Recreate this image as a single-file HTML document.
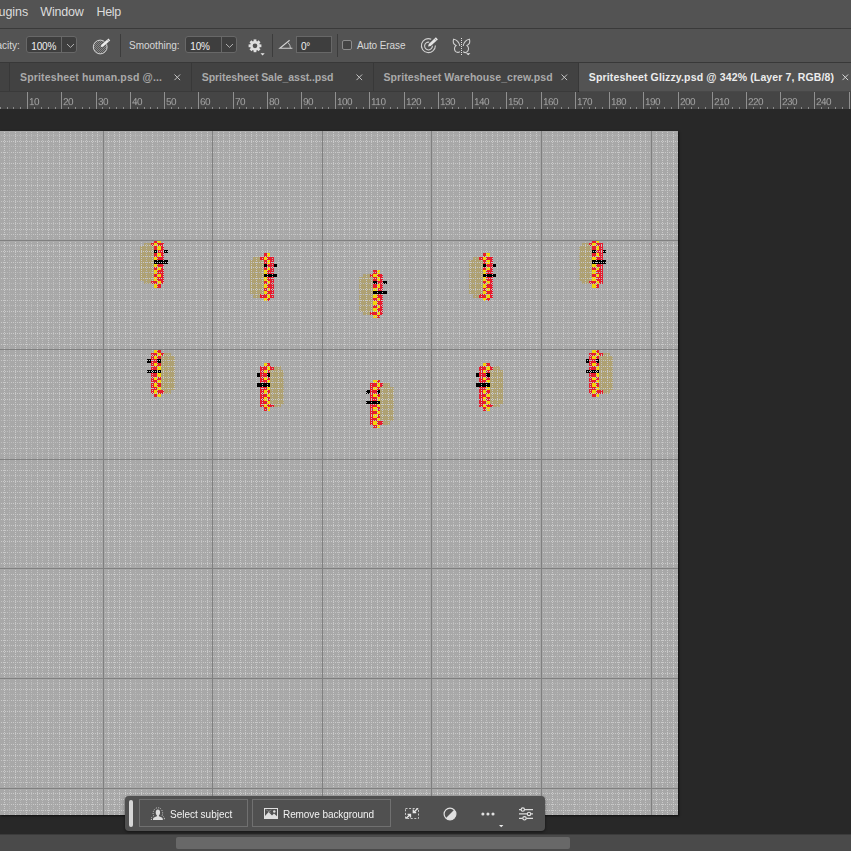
<!DOCTYPE html>
<html><head><meta charset="utf-8"><title>Photoshop</title>
<style>
html,body{margin:0;padding:0;width:851px;height:851px;overflow:hidden;background:#282828;font-family:"Liberation Sans",sans-serif;}
div{position:absolute;box-sizing:border-box}
svg{position:absolute;overflow:visible}
.t{white-space:nowrap;line-height:1}
#menu{left:0;top:0;width:851px;height:28px;background:#535353}
#menu .t{font-size:12.5px;color:#dcdcdc;top:6px}
#opt{left:0;top:29px;width:851px;height:33px;background:#535353}
#opt .t{font-size:10px;color:#d8d8d8;top:12px}
.sep{width:1px;top:5px;height:23px;background:#3c3c3c}
.box{top:7px;height:17px;background:#3e3e3e;border:1px solid #686868;border-radius:3px}
.box .t{color:#f0f0f0!important;top:4.6px!important;font-size:10px!important;letter-spacing:-.2px}
#tabs{left:0;top:63px;width:851px;height:28px;background:#424242}
#tabs .t{font-size:10.5px;font-weight:bold;color:#aaaaaa;top:9px}
.ts{top:0;width:1px;height:28px;background:#383838}
#ruler{left:0;top:92px;width:851px;height:17px;background:#454545;overflow:hidden}
#ruler .t{font-size:10px;color:#a6a6a6;top:5.7px;letter-spacing:-.5px;transform:scaleY(.875);transform-origin:0 1px;will-change:transform}
.mt{top:0;width:1px;height:17px;background:#909090}
.nt{top:15px;width:1px;height:2px;background:#8a8a8a}
#cv{left:0;top:131px;width:678px;height:684px;background:#a8a8a8;overflow:hidden;box-shadow:1px 1px 2px rgba(0,0,0,.6)}
.h{--c:#cacaca;left:0;width:678px;height:1px;background:linear-gradient(90deg,transparent 50%,var(--c) 50%) 0 0/2px 1px}
.v{--c:#cacaca;top:0;height:684px;width:1px;background:linear-gradient(180deg,transparent 50%,var(--c) 50%) 0 0/1px 2px}
.H{left:0;width:678px;height:1px;background:#808080}
.V{top:0;height:684px;width:1px;background:#808080}
.r{background:#e51c2e}.y{background:#efd30a}.k{background:#000}.b{background:#aea173}
#bar{left:125px;top:796px;width:420px;height:35px;background:#505050;border-radius:4px;box-shadow:0 1px 3px rgba(0,0,0,.5)}
#bar .t{font-size:10px;color:#f2f2f2;top:13.5px}
.btn{top:3px;height:28px;border:1px solid #707070}
#sb{left:0;top:834px;width:851px;height:17px;background:#4a4a4a;border-top:1px solid #3b3b3b}
#th{left:176px;top:2px;width:394px;height:12px;background:#686868;border-radius:2px}
</style></head><body>

<div id="menu"><div class="t" style="left:-12.7px">Plugins</div><div class="t" style="left:40.3px;letter-spacing:-.2px">Window</div><div class="t" style="left:96.6px;letter-spacing:-.4px">Help</div></div>
<div style="left:0;top:28px;width:851px;height:1px;background:#3a3a3a"></div>
<div id="opt">
<div class="t" style="left:-16.8px">Opacity:</div>
<div class="box" style="left:26px;width:51px"><div class="t" style="left:4.3px">100%</div><div style="left:34px;top:0;width:1px;height:15px;background:#686868"></div><svg style="left:38.5px;top:5.5px" width="9" height="6" viewBox="0 0 9 6"><path d="M1 1 L4.5 4.4 L8 1" fill="none" stroke="#bdbdbd" stroke-width="0.9"/></svg></div>
<svg style="left:91px;top:7px" width="22" height="20" viewBox="0 0 22 20"><defs><pattern id="ht" width="2" height="2" patternUnits="userSpaceOnUse"><rect width="1" height="1" fill="#848484"/><rect x="1" y="1" width="1" height="1" fill="#848484"/></pattern></defs><circle cx="9.2" cy="11" r="6.9" fill="url(#ht)" stroke="#d2d2d2" stroke-width="1"/><path d="M9.66 10.97 L10.35 8.71 L17.5 2.41 L19.2 4.39 L12.05 10.69 Z" fill="#ececec" stroke="#535353" stroke-width="1" paint-order="stroke"/><path d="M16.2 3.5 L17.9 5.5" stroke="#666" stroke-width="0.6"/></svg>
<div class="sep" style="left:120px"></div>
<div class="t" style="left:129px">Smoothing:</div>
<div class="box" style="left:185px;width:52px"><div class="t" style="left:4.3px">10%</div><div style="left:35px;top:0;width:1px;height:15px;background:#686868"></div><svg style="left:39.3px;top:5.5px" width="9" height="6" viewBox="0 0 9 6"><path d="M1 1 L4.5 4.4 L8 1" fill="none" stroke="#bdbdbd" stroke-width="0.9"/></svg></div>
<svg style="left:246.9px;top:8px" width="20" height="20" viewBox="-8 -8.8 20 20"><circle r="3.6" fill="none" stroke="#e0e0e0" stroke-width="2.5"/><rect x="-1.4" y="-6.4" width="2.8" height="3" transform="rotate(0)" fill="#e0e0e0"/><rect x="-1.4" y="-6.4" width="2.8" height="3" transform="rotate(45)" fill="#e0e0e0"/><rect x="-1.4" y="-6.4" width="2.8" height="3" transform="rotate(90)" fill="#e0e0e0"/><rect x="-1.4" y="-6.4" width="2.8" height="3" transform="rotate(135)" fill="#e0e0e0"/><rect x="-1.4" y="-6.4" width="2.8" height="3" transform="rotate(180)" fill="#e0e0e0"/><rect x="-1.4" y="-6.4" width="2.8" height="3" transform="rotate(225)" fill="#e0e0e0"/><rect x="-1.4" y="-6.4" width="2.8" height="3" transform="rotate(270)" fill="#e0e0e0"/><rect x="-1.4" y="-6.4" width="2.8" height="3" transform="rotate(315)" fill="#e0e0e0"/><path d="M5.5 7.4 L9.7 7.4 L7.6 9.6 Z" fill="#e8e8e8"/></svg>
<div class="sep" style="left:272px"></div>
<svg style="left:278px;top:10px" width="16" height="11" viewBox="0 0 16 11"><path d="M11.6 1.2 L1.8 9.2 L14.4 9.2" fill="none" stroke="#d2d2d2" stroke-width="1.1" stroke-linejoin="miter"/><path d="M10 3.6 Q12.4 5.8 12.4 9.2" fill="none" stroke="#c0c0c0" stroke-width="1"/></svg>
<div class="box" style="left:296px;width:36px;border-radius:0"><div class="t" style="left:4px">0°</div></div>
<div class="sep" style="left:337px"></div>
<div style="left:342px;top:11px;width:10px;height:10px;border:1px solid #8c8c8c;border-radius:2px;background:#444"></div>
<div class="t" style="left:356.9px;letter-spacing:-.1px">Auto Erase</div>
<svg style="left:419px;top:7px" width="22" height="20" viewBox="0 0 22 20"><path d="M12.2 3.2 A7 7 0 1 0 16.4 9.6" fill="none" stroke="#d0d0d0" stroke-width="1.1"/><path d="M10.2 6.2 A3.9 3.9 0 1 0 13.4 9.8" fill="none" stroke="#d0d0d0" stroke-width="1.1"/><path d="M9 10.5 L9.8 8.1 L16.9 1.3 L18.9 3.4 L11.7 10 Z" fill="#e4e4e4" stroke="#535353" stroke-width="1" paint-order="stroke"/><path d="M15.6 2.6 L17.5 4.7" stroke="#777" stroke-width="0.6"/></svg>
<svg style="left:452px;top:8px" width="20" height="19" viewBox="0 0 20 19"><path d="M7.8 9 C7.4 5.6 4.6 2.4 1.6 2.2 C0.8 4.6 1.6 7.4 4 8.6 C2.2 9.8 2 12.6 3.4 14.4 C4.8 15.8 6.8 15.6 7.8 14.6" fill="none" stroke="#d0d0d0" stroke-width="1.1"/><path d="M11.2 9 C11.6 5.6 14.4 2.4 17.4 2.2 C18.2 4.6 17.4 7.4 15 8.6 C16.8 9.8 17 12.6 15.6 14.4 C14.2 15.8 12.2 15.6 11.2 14.6" fill="none" stroke="#d0d0d0" stroke-width="1.1"/><path d="M9.5 1 V18" stroke="#e0e0e0" stroke-width="1" stroke-dasharray="1 1" fill="none" shape-rendering="crispEdges"/><path d="M14 16.2 L18.4 16.2 L16.2 18.2 Z" fill="#e4e4e4"/></svg>
</div>
<div style="left:0;top:62px;width:851px;height:1px;background:#383838"></div>
<div id="tabs">
<div class="ts" style="left:9px"></div><div class="ts" style="left:191px"></div><div class="ts" style="left:373px"></div>
<div class="ts" style="left:578px"></div><div style="left:579px;top:0;width:272px;height:28px;background:#535353"></div>
<div class="t" style="left:20px;letter-spacing:.16px">Spritesheet human.psd @...</div>
<div class="t" style="left:201.8px;letter-spacing:-.06px">Spritesheet Sale_asst..psd</div>
<div class="t" style="left:383.5px;letter-spacing:.063px">Spritesheet Warehouse_crew.psd</div>
<div class="t" style="left:588.8px;color:#ececec;letter-spacing:.143px">Spritesheet Glizzy.psd @ 342% (Layer 7, RGB/8)</div>
<svg style="left:174.1px;top:11px" width="7" height="7" viewBox="0 0 7 7"><path d="M0.5 0.5 L6.1 6.1 M6.1 0.5 L0.5 6.1" stroke="#c4c4c4" stroke-width="1" fill="none"/></svg>
<svg style="left:356.1px;top:11px" width="7" height="7" viewBox="0 0 7 7"><path d="M0.5 0.5 L6.1 6.1 M6.1 0.5 L0.5 6.1" stroke="#c4c4c4" stroke-width="1" fill="none"/></svg>
<svg style="left:560.9px;top:11px" width="7" height="7" viewBox="0 0 7 7"><path d="M0.5 0.5 L6.1 6.1 M6.1 0.5 L0.5 6.1" stroke="#c4c4c4" stroke-width="1" fill="none"/></svg>
<svg style="left:841.6px;top:11px" width="7" height="7" viewBox="0 0 7 7"><path d="M0.5 0.5 L6.1 6.1 M6.1 0.5 L0.5 6.1" stroke="#d4d4d4" stroke-width="1" fill="none"/></svg>
</div>
<div style="left:0;top:91px;width:578px;height:1px;background:#3a3a3a"></div>
<div style="left:579px;top:91px;width:272px;height:1px;background:#484848"></div>
<div id="ruler">
<div class="nt" style="left:0px"></div>
<div class="nt" style="left:7px"></div>
<div class="nt" style="left:13px"></div>
<div class="nt" style="left:20px"></div>
<div class="mt" style="left:27px"></div><div class="t" style="left:29px">10</div>
<div class="nt" style="left:34px"></div>
<div class="nt" style="left:41px"></div>
<div class="nt" style="left:48px"></div>
<div class="nt" style="left:55px"></div>
<div class="mt" style="left:61px"></div><div class="t" style="left:63px">20</div>
<div class="nt" style="left:68px"></div>
<div class="nt" style="left:75px"></div>
<div class="nt" style="left:82px"></div>
<div class="nt" style="left:89px"></div>
<div class="mt" style="left:96px"></div><div class="t" style="left:98px">30</div>
<div class="nt" style="left:102px"></div>
<div class="nt" style="left:109px"></div>
<div class="nt" style="left:116px"></div>
<div class="nt" style="left:123px"></div>
<div class="mt" style="left:130px"></div><div class="t" style="left:132px">40</div>
<div class="nt" style="left:137px"></div>
<div class="nt" style="left:144px"></div>
<div class="nt" style="left:150px"></div>
<div class="nt" style="left:157px"></div>
<div class="mt" style="left:164px"></div><div class="t" style="left:166px">50</div>
<div class="nt" style="left:171px"></div>
<div class="nt" style="left:178px"></div>
<div class="nt" style="left:185px"></div>
<div class="nt" style="left:191px"></div>
<div class="mt" style="left:198px"></div><div class="t" style="left:200px">60</div>
<div class="nt" style="left:205px"></div>
<div class="nt" style="left:212px"></div>
<div class="nt" style="left:219px"></div>
<div class="nt" style="left:226px"></div>
<div class="mt" style="left:233px"></div><div class="t" style="left:235px">70</div>
<div class="nt" style="left:239px"></div>
<div class="nt" style="left:246px"></div>
<div class="nt" style="left:253px"></div>
<div class="nt" style="left:260px"></div>
<div class="mt" style="left:267px"></div><div class="t" style="left:269px">80</div>
<div class="nt" style="left:274px"></div>
<div class="nt" style="left:280px"></div>
<div class="nt" style="left:287px"></div>
<div class="nt" style="left:294px"></div>
<div class="mt" style="left:301px"></div><div class="t" style="left:303px">90</div>
<div class="nt" style="left:308px"></div>
<div class="nt" style="left:315px"></div>
<div class="nt" style="left:322px"></div>
<div class="nt" style="left:328px"></div>
<div class="mt" style="left:335px"></div><div class="t" style="left:337px">100</div>
<div class="nt" style="left:342px"></div>
<div class="nt" style="left:349px"></div>
<div class="nt" style="left:356px"></div>
<div class="nt" style="left:363px"></div>
<div class="mt" style="left:369px"></div><div class="t" style="left:371px">110</div>
<div class="nt" style="left:376px"></div>
<div class="nt" style="left:383px"></div>
<div class="nt" style="left:390px"></div>
<div class="nt" style="left:397px"></div>
<div class="mt" style="left:404px"></div><div class="t" style="left:406px">120</div>
<div class="nt" style="left:411px"></div>
<div class="nt" style="left:417px"></div>
<div class="nt" style="left:424px"></div>
<div class="nt" style="left:431px"></div>
<div class="mt" style="left:438px"></div><div class="t" style="left:440px">130</div>
<div class="nt" style="left:445px"></div>
<div class="nt" style="left:452px"></div>
<div class="nt" style="left:458px"></div>
<div class="nt" style="left:465px"></div>
<div class="mt" style="left:472px"></div><div class="t" style="left:474px">140</div>
<div class="nt" style="left:479px"></div>
<div class="nt" style="left:486px"></div>
<div class="nt" style="left:493px"></div>
<div class="nt" style="left:500px"></div>
<div class="mt" style="left:506px"></div><div class="t" style="left:508px">150</div>
<div class="nt" style="left:513px"></div>
<div class="nt" style="left:520px"></div>
<div class="nt" style="left:527px"></div>
<div class="nt" style="left:534px"></div>
<div class="mt" style="left:541px"></div><div class="t" style="left:543px">160</div>
<div class="nt" style="left:547px"></div>
<div class="nt" style="left:554px"></div>
<div class="nt" style="left:561px"></div>
<div class="nt" style="left:568px"></div>
<div class="mt" style="left:575px"></div><div class="t" style="left:577px">170</div>
<div class="nt" style="left:582px"></div>
<div class="nt" style="left:589px"></div>
<div class="nt" style="left:595px"></div>
<div class="nt" style="left:602px"></div>
<div class="mt" style="left:609px"></div><div class="t" style="left:611px">180</div>
<div class="nt" style="left:616px"></div>
<div class="nt" style="left:623px"></div>
<div class="nt" style="left:630px"></div>
<div class="nt" style="left:636px"></div>
<div class="mt" style="left:643px"></div><div class="t" style="left:645px">190</div>
<div class="nt" style="left:650px"></div>
<div class="nt" style="left:657px"></div>
<div class="nt" style="left:664px"></div>
<div class="nt" style="left:671px"></div>
<div class="mt" style="left:678px"></div><div class="t" style="left:680px">200</div>
<div class="nt" style="left:684px"></div>
<div class="nt" style="left:691px"></div>
<div class="nt" style="left:698px"></div>
<div class="nt" style="left:705px"></div>
<div class="mt" style="left:712px"></div><div class="t" style="left:714px">210</div>
<div class="nt" style="left:719px"></div>
<div class="nt" style="left:725px"></div>
<div class="nt" style="left:732px"></div>
<div class="nt" style="left:739px"></div>
<div class="mt" style="left:746px"></div><div class="t" style="left:748px">220</div>
<div class="nt" style="left:753px"></div>
<div class="nt" style="left:760px"></div>
<div class="nt" style="left:767px"></div>
<div class="nt" style="left:773px"></div>
<div class="mt" style="left:780px"></div><div class="t" style="left:782px">230</div>
<div class="nt" style="left:787px"></div>
<div class="nt" style="left:794px"></div>
<div class="nt" style="left:801px"></div>
<div class="nt" style="left:808px"></div>
<div class="mt" style="left:814px"></div><div class="t" style="left:816px">240</div>
<div class="nt" style="left:821px"></div>
<div class="nt" style="left:828px"></div>
<div class="nt" style="left:835px"></div>
<div class="nt" style="left:842px"></div>
<div class="mt" style="left:849px"></div><div class="t" style="left:851px">250</div>
</div>
<div id="cv">
<div class="b" style="left:140px;top:115px;width:14px;height:35px"></div>
<div class="b" style="left:144px;top:112px;width:10px;height:3px"></div>
<div class="b" style="left:144px;top:150px;width:10px;height:3px"></div>
<div class="r" style="left:151px;top:112px;width:3px;height:3px"></div>
<div class="r" style="left:151px;top:150px;width:3px;height:3px"></div>
<div class="r" style="left:154px;top:109px;width:3px;height:3px"></div>
<div class="y" style="left:157px;top:109px;width:4px;height:3px"></div>
<div class="y" style="left:154px;top:112px;width:3px;height:3px"></div>
<div class="r" style="left:157px;top:112px;width:4px;height:3px"></div>
<div class="r" style="left:161px;top:112px;width:3px;height:3px"></div>
<div class="r" style="left:154px;top:115px;width:3px;height:4px"></div>
<div class="y" style="left:157px;top:115px;width:4px;height:4px"></div>
<div class="r" style="left:161px;top:115px;width:3px;height:4px"></div>
<div class="k" style="left:154px;top:119px;width:3px;height:3px"></div>
<div class="r" style="left:157px;top:119px;width:4px;height:3px"></div>
<div class="r" style="left:161px;top:119px;width:3px;height:3px"></div>
<div class="r" style="left:154px;top:122px;width:3px;height:4px"></div>
<div class="y" style="left:157px;top:122px;width:4px;height:4px"></div>
<div class="r" style="left:161px;top:122px;width:3px;height:4px"></div>
<div class="y" style="left:154px;top:126px;width:3px;height:3px"></div>
<div class="r" style="left:157px;top:126px;width:4px;height:3px"></div>
<div class="r" style="left:161px;top:126px;width:3px;height:3px"></div>
<div class="k" style="left:154px;top:129px;width:3px;height:4px"></div>
<div class="k" style="left:157px;top:129px;width:4px;height:4px"></div>
<div class="k" style="left:161px;top:129px;width:3px;height:4px"></div>
<div class="y" style="left:154px;top:133px;width:3px;height:3px"></div>
<div class="r" style="left:157px;top:133px;width:4px;height:3px"></div>
<div class="r" style="left:161px;top:133px;width:3px;height:3px"></div>
<div class="r" style="left:154px;top:136px;width:3px;height:3px"></div>
<div class="y" style="left:157px;top:136px;width:4px;height:3px"></div>
<div class="r" style="left:161px;top:136px;width:3px;height:3px"></div>
<div class="y" style="left:154px;top:139px;width:3px;height:4px"></div>
<div class="r" style="left:157px;top:139px;width:4px;height:4px"></div>
<div class="r" style="left:161px;top:139px;width:3px;height:4px"></div>
<div class="r" style="left:154px;top:143px;width:3px;height:3px"></div>
<div class="y" style="left:157px;top:143px;width:4px;height:3px"></div>
<div class="r" style="left:161px;top:143px;width:3px;height:3px"></div>
<div class="y" style="left:154px;top:146px;width:3px;height:4px"></div>
<div class="r" style="left:157px;top:146px;width:4px;height:4px"></div>
<div class="r" style="left:161px;top:146px;width:3px;height:4px"></div>
<div class="r" style="left:154px;top:150px;width:3px;height:3px"></div>
<div class="y" style="left:157px;top:150px;width:4px;height:3px"></div>
<div class="r" style="left:161px;top:150px;width:3px;height:3px"></div>
<div class="y" style="left:154px;top:153px;width:3px;height:4px"></div>
<div class="r" style="left:157px;top:153px;width:4px;height:4px"></div>
<div class="k" style="left:164px;top:119px;width:4px;height:3px"></div>
<div class="k" style="left:164px;top:129px;width:4px;height:4px"></div>
<div class="b" style="left:161px;top:225px;width:14px;height:34px"></div>
<div class="b" style="left:161px;top:222px;width:10px;height:3px"></div>
<div class="b" style="left:161px;top:259px;width:10px;height:4px"></div>
<div class="r" style="left:161px;top:222px;width:3px;height:3px"></div>
<div class="r" style="left:161px;top:259px;width:3px;height:4px"></div>
<div class="r" style="left:157px;top:218px;width:4px;height:4px"></div>
<div class="y" style="left:154px;top:218px;width:3px;height:4px"></div>
<div class="y" style="left:157px;top:222px;width:4px;height:3px"></div>
<div class="r" style="left:154px;top:222px;width:3px;height:3px"></div>
<div class="r" style="left:151px;top:222px;width:3px;height:3px"></div>
<div class="r" style="left:157px;top:225px;width:4px;height:3px"></div>
<div class="y" style="left:154px;top:225px;width:3px;height:3px"></div>
<div class="r" style="left:151px;top:225px;width:3px;height:3px"></div>
<div class="k" style="left:157px;top:228px;width:4px;height:4px"></div>
<div class="r" style="left:154px;top:228px;width:3px;height:4px"></div>
<div class="r" style="left:151px;top:228px;width:3px;height:4px"></div>
<div class="r" style="left:157px;top:232px;width:4px;height:3px"></div>
<div class="y" style="left:154px;top:232px;width:3px;height:3px"></div>
<div class="r" style="left:151px;top:232px;width:3px;height:3px"></div>
<div class="y" style="left:157px;top:235px;width:4px;height:4px"></div>
<div class="r" style="left:154px;top:235px;width:3px;height:4px"></div>
<div class="r" style="left:151px;top:235px;width:3px;height:4px"></div>
<div class="k" style="left:157px;top:239px;width:4px;height:3px"></div>
<div class="k" style="left:154px;top:239px;width:3px;height:3px"></div>
<div class="k" style="left:151px;top:239px;width:3px;height:3px"></div>
<div class="y" style="left:157px;top:242px;width:4px;height:4px"></div>
<div class="r" style="left:154px;top:242px;width:3px;height:4px"></div>
<div class="r" style="left:151px;top:242px;width:3px;height:4px"></div>
<div class="r" style="left:157px;top:246px;width:4px;height:3px"></div>
<div class="y" style="left:154px;top:246px;width:3px;height:3px"></div>
<div class="r" style="left:151px;top:246px;width:3px;height:3px"></div>
<div class="y" style="left:157px;top:249px;width:4px;height:3px"></div>
<div class="r" style="left:154px;top:249px;width:3px;height:3px"></div>
<div class="r" style="left:151px;top:249px;width:3px;height:3px"></div>
<div class="r" style="left:157px;top:252px;width:4px;height:4px"></div>
<div class="y" style="left:154px;top:252px;width:3px;height:4px"></div>
<div class="r" style="left:151px;top:252px;width:3px;height:4px"></div>
<div class="y" style="left:157px;top:256px;width:4px;height:3px"></div>
<div class="r" style="left:154px;top:256px;width:3px;height:3px"></div>
<div class="r" style="left:151px;top:256px;width:3px;height:3px"></div>
<div class="r" style="left:157px;top:259px;width:4px;height:4px"></div>
<div class="y" style="left:154px;top:259px;width:3px;height:4px"></div>
<div class="r" style="left:151px;top:259px;width:3px;height:4px"></div>
<div class="y" style="left:157px;top:263px;width:4px;height:3px"></div>
<div class="r" style="left:154px;top:263px;width:3px;height:3px"></div>
<div class="k" style="left:147px;top:228px;width:4px;height:4px"></div>
<div class="k" style="left:147px;top:239px;width:4px;height:3px"></div>
<div class="b" style="left:250px;top:129px;width:14px;height:34px"></div>
<div class="b" style="left:253px;top:126px;width:11px;height:3px"></div>
<div class="b" style="left:253px;top:163px;width:11px;height:4px"></div>
<div class="r" style="left:260px;top:126px;width:4px;height:3px"></div>
<div class="r" style="left:260px;top:163px;width:4px;height:4px"></div>
<div class="r" style="left:264px;top:122px;width:3px;height:4px"></div>
<div class="y" style="left:267px;top:122px;width:3px;height:4px"></div>
<div class="y" style="left:264px;top:126px;width:3px;height:3px"></div>
<div class="r" style="left:267px;top:126px;width:3px;height:3px"></div>
<div class="r" style="left:270px;top:126px;width:4px;height:3px"></div>
<div class="r" style="left:264px;top:129px;width:3px;height:4px"></div>
<div class="y" style="left:267px;top:129px;width:3px;height:4px"></div>
<div class="r" style="left:270px;top:129px;width:4px;height:4px"></div>
<div class="k" style="left:264px;top:133px;width:3px;height:3px"></div>
<div class="r" style="left:267px;top:133px;width:3px;height:3px"></div>
<div class="r" style="left:270px;top:133px;width:4px;height:3px"></div>
<div class="r" style="left:264px;top:136px;width:3px;height:3px"></div>
<div class="y" style="left:267px;top:136px;width:3px;height:3px"></div>
<div class="r" style="left:270px;top:136px;width:4px;height:3px"></div>
<div class="y" style="left:264px;top:139px;width:3px;height:4px"></div>
<div class="r" style="left:267px;top:139px;width:3px;height:4px"></div>
<div class="r" style="left:270px;top:139px;width:4px;height:4px"></div>
<div class="k" style="left:264px;top:143px;width:3px;height:3px"></div>
<div class="k" style="left:267px;top:143px;width:3px;height:3px"></div>
<div class="k" style="left:270px;top:143px;width:4px;height:3px"></div>
<div class="y" style="left:264px;top:146px;width:3px;height:4px"></div>
<div class="r" style="left:267px;top:146px;width:3px;height:4px"></div>
<div class="r" style="left:270px;top:146px;width:4px;height:4px"></div>
<div class="r" style="left:264px;top:150px;width:3px;height:3px"></div>
<div class="y" style="left:267px;top:150px;width:3px;height:3px"></div>
<div class="r" style="left:270px;top:150px;width:4px;height:3px"></div>
<div class="y" style="left:264px;top:153px;width:3px;height:4px"></div>
<div class="r" style="left:267px;top:153px;width:3px;height:4px"></div>
<div class="r" style="left:270px;top:153px;width:4px;height:4px"></div>
<div class="r" style="left:264px;top:157px;width:3px;height:3px"></div>
<div class="y" style="left:267px;top:157px;width:3px;height:3px"></div>
<div class="r" style="left:270px;top:157px;width:4px;height:3px"></div>
<div class="y" style="left:264px;top:160px;width:3px;height:3px"></div>
<div class="r" style="left:267px;top:160px;width:3px;height:3px"></div>
<div class="r" style="left:270px;top:160px;width:4px;height:3px"></div>
<div class="r" style="left:264px;top:163px;width:3px;height:4px"></div>
<div class="y" style="left:267px;top:163px;width:3px;height:4px"></div>
<div class="r" style="left:270px;top:163px;width:4px;height:4px"></div>
<div class="y" style="left:264px;top:167px;width:3px;height:3px"></div>
<div class="r" style="left:267px;top:167px;width:3px;height:3px"></div>
<div class="k" style="left:274px;top:133px;width:3px;height:3px"></div>
<div class="k" style="left:274px;top:143px;width:3px;height:3px"></div>
<div class="b" style="left:270px;top:239px;width:14px;height:34px"></div>
<div class="b" style="left:270px;top:235px;width:11px;height:4px"></div>
<div class="b" style="left:270px;top:273px;width:11px;height:3px"></div>
<div class="r" style="left:270px;top:235px;width:4px;height:4px"></div>
<div class="r" style="left:270px;top:273px;width:4px;height:3px"></div>
<div class="r" style="left:267px;top:232px;width:3px;height:3px"></div>
<div class="y" style="left:264px;top:232px;width:3px;height:3px"></div>
<div class="y" style="left:267px;top:235px;width:3px;height:4px"></div>
<div class="r" style="left:264px;top:235px;width:3px;height:4px"></div>
<div class="r" style="left:260px;top:235px;width:4px;height:4px"></div>
<div class="r" style="left:267px;top:239px;width:3px;height:3px"></div>
<div class="y" style="left:264px;top:239px;width:3px;height:3px"></div>
<div class="r" style="left:260px;top:239px;width:4px;height:3px"></div>
<div class="k" style="left:267px;top:242px;width:3px;height:4px"></div>
<div class="r" style="left:264px;top:242px;width:3px;height:4px"></div>
<div class="r" style="left:260px;top:242px;width:4px;height:4px"></div>
<div class="r" style="left:267px;top:246px;width:3px;height:3px"></div>
<div class="y" style="left:264px;top:246px;width:3px;height:3px"></div>
<div class="r" style="left:260px;top:246px;width:4px;height:3px"></div>
<div class="y" style="left:267px;top:249px;width:3px;height:3px"></div>
<div class="r" style="left:264px;top:249px;width:3px;height:3px"></div>
<div class="r" style="left:260px;top:249px;width:4px;height:3px"></div>
<div class="k" style="left:267px;top:252px;width:3px;height:4px"></div>
<div class="k" style="left:264px;top:252px;width:3px;height:4px"></div>
<div class="k" style="left:260px;top:252px;width:4px;height:4px"></div>
<div class="y" style="left:267px;top:256px;width:3px;height:3px"></div>
<div class="r" style="left:264px;top:256px;width:3px;height:3px"></div>
<div class="r" style="left:260px;top:256px;width:4px;height:3px"></div>
<div class="r" style="left:267px;top:259px;width:3px;height:4px"></div>
<div class="y" style="left:264px;top:259px;width:3px;height:4px"></div>
<div class="r" style="left:260px;top:259px;width:4px;height:4px"></div>
<div class="y" style="left:267px;top:263px;width:3px;height:3px"></div>
<div class="r" style="left:264px;top:263px;width:3px;height:3px"></div>
<div class="r" style="left:260px;top:263px;width:4px;height:3px"></div>
<div class="r" style="left:267px;top:266px;width:3px;height:4px"></div>
<div class="y" style="left:264px;top:266px;width:3px;height:4px"></div>
<div class="r" style="left:260px;top:266px;width:4px;height:4px"></div>
<div class="y" style="left:267px;top:270px;width:3px;height:3px"></div>
<div class="r" style="left:264px;top:270px;width:3px;height:3px"></div>
<div class="r" style="left:260px;top:270px;width:4px;height:3px"></div>
<div class="r" style="left:267px;top:273px;width:3px;height:3px"></div>
<div class="y" style="left:264px;top:273px;width:3px;height:3px"></div>
<div class="r" style="left:260px;top:273px;width:4px;height:3px"></div>
<div class="y" style="left:267px;top:276px;width:3px;height:4px"></div>
<div class="r" style="left:264px;top:276px;width:3px;height:4px"></div>
<div class="k" style="left:257px;top:242px;width:3px;height:4px"></div>
<div class="k" style="left:257px;top:252px;width:3px;height:4px"></div>
<div class="b" style="left:359px;top:146px;width:14px;height:35px"></div>
<div class="b" style="left:363px;top:143px;width:10px;height:3px"></div>
<div class="b" style="left:363px;top:181px;width:10px;height:3px"></div>
<div class="r" style="left:370px;top:143px;width:3px;height:3px"></div>
<div class="r" style="left:370px;top:181px;width:3px;height:3px"></div>
<div class="r" style="left:373px;top:139px;width:4px;height:4px"></div>
<div class="y" style="left:377px;top:139px;width:3px;height:4px"></div>
<div class="y" style="left:373px;top:143px;width:4px;height:3px"></div>
<div class="r" style="left:377px;top:143px;width:3px;height:3px"></div>
<div class="r" style="left:380px;top:143px;width:3px;height:3px"></div>
<div class="r" style="left:373px;top:146px;width:4px;height:4px"></div>
<div class="y" style="left:377px;top:146px;width:3px;height:4px"></div>
<div class="r" style="left:380px;top:146px;width:3px;height:4px"></div>
<div class="k" style="left:373px;top:150px;width:4px;height:3px"></div>
<div class="r" style="left:377px;top:150px;width:3px;height:3px"></div>
<div class="r" style="left:380px;top:150px;width:3px;height:3px"></div>
<div class="r" style="left:373px;top:153px;width:4px;height:4px"></div>
<div class="y" style="left:377px;top:153px;width:3px;height:4px"></div>
<div class="r" style="left:380px;top:153px;width:3px;height:4px"></div>
<div class="y" style="left:373px;top:157px;width:4px;height:3px"></div>
<div class="r" style="left:377px;top:157px;width:3px;height:3px"></div>
<div class="r" style="left:380px;top:157px;width:3px;height:3px"></div>
<div class="k" style="left:373px;top:160px;width:4px;height:3px"></div>
<div class="k" style="left:377px;top:160px;width:3px;height:3px"></div>
<div class="k" style="left:380px;top:160px;width:3px;height:3px"></div>
<div class="y" style="left:373px;top:163px;width:4px;height:4px"></div>
<div class="r" style="left:377px;top:163px;width:3px;height:4px"></div>
<div class="r" style="left:380px;top:163px;width:3px;height:4px"></div>
<div class="r" style="left:373px;top:167px;width:4px;height:3px"></div>
<div class="y" style="left:377px;top:167px;width:3px;height:3px"></div>
<div class="r" style="left:380px;top:167px;width:3px;height:3px"></div>
<div class="y" style="left:373px;top:170px;width:4px;height:4px"></div>
<div class="r" style="left:377px;top:170px;width:3px;height:4px"></div>
<div class="r" style="left:380px;top:170px;width:3px;height:4px"></div>
<div class="r" style="left:373px;top:174px;width:4px;height:3px"></div>
<div class="y" style="left:377px;top:174px;width:3px;height:3px"></div>
<div class="r" style="left:380px;top:174px;width:3px;height:3px"></div>
<div class="y" style="left:373px;top:177px;width:4px;height:4px"></div>
<div class="r" style="left:377px;top:177px;width:3px;height:4px"></div>
<div class="r" style="left:380px;top:177px;width:3px;height:4px"></div>
<div class="r" style="left:373px;top:181px;width:4px;height:3px"></div>
<div class="y" style="left:377px;top:181px;width:3px;height:3px"></div>
<div class="r" style="left:380px;top:181px;width:3px;height:3px"></div>
<div class="y" style="left:373px;top:184px;width:4px;height:3px"></div>
<div class="r" style="left:377px;top:184px;width:3px;height:3px"></div>
<div class="k" style="left:383px;top:150px;width:4px;height:3px"></div>
<div class="k" style="left:383px;top:160px;width:4px;height:3px"></div>
<div class="b" style="left:380px;top:256px;width:14px;height:34px"></div>
<div class="b" style="left:380px;top:252px;width:10px;height:4px"></div>
<div class="b" style="left:380px;top:290px;width:10px;height:4px"></div>
<div class="r" style="left:380px;top:252px;width:3px;height:4px"></div>
<div class="r" style="left:380px;top:290px;width:3px;height:4px"></div>
<div class="r" style="left:377px;top:249px;width:3px;height:3px"></div>
<div class="y" style="left:373px;top:249px;width:4px;height:3px"></div>
<div class="y" style="left:377px;top:252px;width:3px;height:4px"></div>
<div class="r" style="left:373px;top:252px;width:4px;height:4px"></div>
<div class="r" style="left:370px;top:252px;width:3px;height:4px"></div>
<div class="r" style="left:377px;top:256px;width:3px;height:3px"></div>
<div class="y" style="left:373px;top:256px;width:4px;height:3px"></div>
<div class="r" style="left:370px;top:256px;width:3px;height:3px"></div>
<div class="k" style="left:377px;top:259px;width:3px;height:4px"></div>
<div class="r" style="left:373px;top:259px;width:4px;height:4px"></div>
<div class="r" style="left:370px;top:259px;width:3px;height:4px"></div>
<div class="r" style="left:377px;top:263px;width:3px;height:3px"></div>
<div class="y" style="left:373px;top:263px;width:4px;height:3px"></div>
<div class="r" style="left:370px;top:263px;width:3px;height:3px"></div>
<div class="y" style="left:377px;top:266px;width:3px;height:4px"></div>
<div class="r" style="left:373px;top:266px;width:4px;height:4px"></div>
<div class="r" style="left:370px;top:266px;width:3px;height:4px"></div>
<div class="k" style="left:377px;top:270px;width:3px;height:3px"></div>
<div class="k" style="left:373px;top:270px;width:4px;height:3px"></div>
<div class="k" style="left:370px;top:270px;width:3px;height:3px"></div>
<div class="y" style="left:377px;top:273px;width:3px;height:3px"></div>
<div class="r" style="left:373px;top:273px;width:4px;height:3px"></div>
<div class="r" style="left:370px;top:273px;width:3px;height:3px"></div>
<div class="r" style="left:377px;top:276px;width:3px;height:4px"></div>
<div class="y" style="left:373px;top:276px;width:4px;height:4px"></div>
<div class="r" style="left:370px;top:276px;width:3px;height:4px"></div>
<div class="y" style="left:377px;top:280px;width:3px;height:3px"></div>
<div class="r" style="left:373px;top:280px;width:4px;height:3px"></div>
<div class="r" style="left:370px;top:280px;width:3px;height:3px"></div>
<div class="r" style="left:377px;top:283px;width:3px;height:4px"></div>
<div class="y" style="left:373px;top:283px;width:4px;height:4px"></div>
<div class="r" style="left:370px;top:283px;width:3px;height:4px"></div>
<div class="y" style="left:377px;top:287px;width:3px;height:3px"></div>
<div class="r" style="left:373px;top:287px;width:4px;height:3px"></div>
<div class="r" style="left:370px;top:287px;width:3px;height:3px"></div>
<div class="r" style="left:377px;top:290px;width:3px;height:4px"></div>
<div class="y" style="left:373px;top:290px;width:4px;height:4px"></div>
<div class="r" style="left:370px;top:290px;width:3px;height:4px"></div>
<div class="y" style="left:377px;top:294px;width:3px;height:3px"></div>
<div class="r" style="left:373px;top:294px;width:4px;height:3px"></div>
<div class="k" style="left:366px;top:259px;width:4px;height:4px"></div>
<div class="k" style="left:366px;top:270px;width:4px;height:3px"></div>
<div class="b" style="left:469px;top:129px;width:14px;height:34px"></div>
<div class="b" style="left:473px;top:126px;width:10px;height:3px"></div>
<div class="b" style="left:473px;top:163px;width:10px;height:4px"></div>
<div class="r" style="left:479px;top:126px;width:4px;height:3px"></div>
<div class="r" style="left:479px;top:163px;width:4px;height:4px"></div>
<div class="r" style="left:483px;top:122px;width:3px;height:4px"></div>
<div class="y" style="left:486px;top:122px;width:4px;height:4px"></div>
<div class="y" style="left:483px;top:126px;width:3px;height:3px"></div>
<div class="r" style="left:486px;top:126px;width:4px;height:3px"></div>
<div class="r" style="left:490px;top:126px;width:3px;height:3px"></div>
<div class="r" style="left:483px;top:129px;width:3px;height:4px"></div>
<div class="y" style="left:486px;top:129px;width:4px;height:4px"></div>
<div class="r" style="left:490px;top:129px;width:3px;height:4px"></div>
<div class="k" style="left:483px;top:133px;width:3px;height:3px"></div>
<div class="r" style="left:486px;top:133px;width:4px;height:3px"></div>
<div class="r" style="left:490px;top:133px;width:3px;height:3px"></div>
<div class="r" style="left:483px;top:136px;width:3px;height:3px"></div>
<div class="y" style="left:486px;top:136px;width:4px;height:3px"></div>
<div class="r" style="left:490px;top:136px;width:3px;height:3px"></div>
<div class="y" style="left:483px;top:139px;width:3px;height:4px"></div>
<div class="r" style="left:486px;top:139px;width:4px;height:4px"></div>
<div class="r" style="left:490px;top:139px;width:3px;height:4px"></div>
<div class="k" style="left:483px;top:143px;width:3px;height:3px"></div>
<div class="k" style="left:486px;top:143px;width:4px;height:3px"></div>
<div class="k" style="left:490px;top:143px;width:3px;height:3px"></div>
<div class="y" style="left:483px;top:146px;width:3px;height:4px"></div>
<div class="r" style="left:486px;top:146px;width:4px;height:4px"></div>
<div class="r" style="left:490px;top:146px;width:3px;height:4px"></div>
<div class="r" style="left:483px;top:150px;width:3px;height:3px"></div>
<div class="y" style="left:486px;top:150px;width:4px;height:3px"></div>
<div class="r" style="left:490px;top:150px;width:3px;height:3px"></div>
<div class="y" style="left:483px;top:153px;width:3px;height:4px"></div>
<div class="r" style="left:486px;top:153px;width:4px;height:4px"></div>
<div class="r" style="left:490px;top:153px;width:3px;height:4px"></div>
<div class="r" style="left:483px;top:157px;width:3px;height:3px"></div>
<div class="y" style="left:486px;top:157px;width:4px;height:3px"></div>
<div class="r" style="left:490px;top:157px;width:3px;height:3px"></div>
<div class="y" style="left:483px;top:160px;width:3px;height:3px"></div>
<div class="r" style="left:486px;top:160px;width:4px;height:3px"></div>
<div class="r" style="left:490px;top:160px;width:3px;height:3px"></div>
<div class="r" style="left:483px;top:163px;width:3px;height:4px"></div>
<div class="y" style="left:486px;top:163px;width:4px;height:4px"></div>
<div class="r" style="left:490px;top:163px;width:3px;height:4px"></div>
<div class="y" style="left:483px;top:167px;width:3px;height:3px"></div>
<div class="r" style="left:486px;top:167px;width:4px;height:3px"></div>
<div class="k" style="left:493px;top:133px;width:3px;height:3px"></div>
<div class="k" style="left:493px;top:143px;width:3px;height:3px"></div>
<div class="b" style="left:490px;top:239px;width:13px;height:34px"></div>
<div class="b" style="left:490px;top:235px;width:10px;height:4px"></div>
<div class="b" style="left:490px;top:273px;width:10px;height:3px"></div>
<div class="r" style="left:490px;top:235px;width:3px;height:4px"></div>
<div class="r" style="left:490px;top:273px;width:3px;height:3px"></div>
<div class="r" style="left:486px;top:232px;width:4px;height:3px"></div>
<div class="y" style="left:483px;top:232px;width:3px;height:3px"></div>
<div class="y" style="left:486px;top:235px;width:4px;height:4px"></div>
<div class="r" style="left:483px;top:235px;width:3px;height:4px"></div>
<div class="r" style="left:479px;top:235px;width:4px;height:4px"></div>
<div class="r" style="left:486px;top:239px;width:4px;height:3px"></div>
<div class="y" style="left:483px;top:239px;width:3px;height:3px"></div>
<div class="r" style="left:479px;top:239px;width:4px;height:3px"></div>
<div class="k" style="left:486px;top:242px;width:4px;height:4px"></div>
<div class="r" style="left:483px;top:242px;width:3px;height:4px"></div>
<div class="r" style="left:479px;top:242px;width:4px;height:4px"></div>
<div class="r" style="left:486px;top:246px;width:4px;height:3px"></div>
<div class="y" style="left:483px;top:246px;width:3px;height:3px"></div>
<div class="r" style="left:479px;top:246px;width:4px;height:3px"></div>
<div class="y" style="left:486px;top:249px;width:4px;height:3px"></div>
<div class="r" style="left:483px;top:249px;width:3px;height:3px"></div>
<div class="r" style="left:479px;top:249px;width:4px;height:3px"></div>
<div class="k" style="left:486px;top:252px;width:4px;height:4px"></div>
<div class="k" style="left:483px;top:252px;width:3px;height:4px"></div>
<div class="k" style="left:479px;top:252px;width:4px;height:4px"></div>
<div class="y" style="left:486px;top:256px;width:4px;height:3px"></div>
<div class="r" style="left:483px;top:256px;width:3px;height:3px"></div>
<div class="r" style="left:479px;top:256px;width:4px;height:3px"></div>
<div class="r" style="left:486px;top:259px;width:4px;height:4px"></div>
<div class="y" style="left:483px;top:259px;width:3px;height:4px"></div>
<div class="r" style="left:479px;top:259px;width:4px;height:4px"></div>
<div class="y" style="left:486px;top:263px;width:4px;height:3px"></div>
<div class="r" style="left:483px;top:263px;width:3px;height:3px"></div>
<div class="r" style="left:479px;top:263px;width:4px;height:3px"></div>
<div class="r" style="left:486px;top:266px;width:4px;height:4px"></div>
<div class="y" style="left:483px;top:266px;width:3px;height:4px"></div>
<div class="r" style="left:479px;top:266px;width:4px;height:4px"></div>
<div class="y" style="left:486px;top:270px;width:4px;height:3px"></div>
<div class="r" style="left:483px;top:270px;width:3px;height:3px"></div>
<div class="r" style="left:479px;top:270px;width:4px;height:3px"></div>
<div class="r" style="left:486px;top:273px;width:4px;height:3px"></div>
<div class="y" style="left:483px;top:273px;width:3px;height:3px"></div>
<div class="r" style="left:479px;top:273px;width:4px;height:3px"></div>
<div class="y" style="left:486px;top:276px;width:4px;height:4px"></div>
<div class="r" style="left:483px;top:276px;width:3px;height:4px"></div>
<div class="k" style="left:476px;top:242px;width:3px;height:4px"></div>
<div class="k" style="left:476px;top:252px;width:3px;height:4px"></div>
<div class="b" style="left:579px;top:115px;width:13px;height:35px"></div>
<div class="b" style="left:582px;top:112px;width:10px;height:3px"></div>
<div class="b" style="left:582px;top:150px;width:10px;height:3px"></div>
<div class="r" style="left:589px;top:112px;width:3px;height:3px"></div>
<div class="r" style="left:589px;top:150px;width:3px;height:3px"></div>
<div class="r" style="left:592px;top:109px;width:4px;height:3px"></div>
<div class="y" style="left:596px;top:109px;width:3px;height:3px"></div>
<div class="y" style="left:592px;top:112px;width:4px;height:3px"></div>
<div class="r" style="left:596px;top:112px;width:3px;height:3px"></div>
<div class="r" style="left:599px;top:112px;width:4px;height:3px"></div>
<div class="r" style="left:592px;top:115px;width:4px;height:4px"></div>
<div class="y" style="left:596px;top:115px;width:3px;height:4px"></div>
<div class="r" style="left:599px;top:115px;width:4px;height:4px"></div>
<div class="k" style="left:592px;top:119px;width:4px;height:3px"></div>
<div class="r" style="left:596px;top:119px;width:3px;height:3px"></div>
<div class="r" style="left:599px;top:119px;width:4px;height:3px"></div>
<div class="r" style="left:592px;top:122px;width:4px;height:4px"></div>
<div class="y" style="left:596px;top:122px;width:3px;height:4px"></div>
<div class="r" style="left:599px;top:122px;width:4px;height:4px"></div>
<div class="y" style="left:592px;top:126px;width:4px;height:3px"></div>
<div class="r" style="left:596px;top:126px;width:3px;height:3px"></div>
<div class="r" style="left:599px;top:126px;width:4px;height:3px"></div>
<div class="k" style="left:592px;top:129px;width:4px;height:4px"></div>
<div class="k" style="left:596px;top:129px;width:3px;height:4px"></div>
<div class="k" style="left:599px;top:129px;width:4px;height:4px"></div>
<div class="y" style="left:592px;top:133px;width:4px;height:3px"></div>
<div class="r" style="left:596px;top:133px;width:3px;height:3px"></div>
<div class="r" style="left:599px;top:133px;width:4px;height:3px"></div>
<div class="r" style="left:592px;top:136px;width:4px;height:3px"></div>
<div class="y" style="left:596px;top:136px;width:3px;height:3px"></div>
<div class="r" style="left:599px;top:136px;width:4px;height:3px"></div>
<div class="y" style="left:592px;top:139px;width:4px;height:4px"></div>
<div class="r" style="left:596px;top:139px;width:3px;height:4px"></div>
<div class="r" style="left:599px;top:139px;width:4px;height:4px"></div>
<div class="r" style="left:592px;top:143px;width:4px;height:3px"></div>
<div class="y" style="left:596px;top:143px;width:3px;height:3px"></div>
<div class="r" style="left:599px;top:143px;width:4px;height:3px"></div>
<div class="y" style="left:592px;top:146px;width:4px;height:4px"></div>
<div class="r" style="left:596px;top:146px;width:3px;height:4px"></div>
<div class="r" style="left:599px;top:146px;width:4px;height:4px"></div>
<div class="r" style="left:592px;top:150px;width:4px;height:3px"></div>
<div class="y" style="left:596px;top:150px;width:3px;height:3px"></div>
<div class="r" style="left:599px;top:150px;width:4px;height:3px"></div>
<div class="y" style="left:592px;top:153px;width:4px;height:4px"></div>
<div class="r" style="left:596px;top:153px;width:3px;height:4px"></div>
<div class="k" style="left:603px;top:119px;width:3px;height:3px"></div>
<div class="k" style="left:603px;top:129px;width:3px;height:4px"></div>
<div class="b" style="left:599px;top:225px;width:14px;height:34px"></div>
<div class="b" style="left:599px;top:222px;width:11px;height:3px"></div>
<div class="b" style="left:599px;top:259px;width:11px;height:4px"></div>
<div class="r" style="left:599px;top:222px;width:4px;height:3px"></div>
<div class="r" style="left:599px;top:259px;width:4px;height:4px"></div>
<div class="r" style="left:596px;top:218px;width:3px;height:4px"></div>
<div class="y" style="left:592px;top:218px;width:4px;height:4px"></div>
<div class="y" style="left:596px;top:222px;width:3px;height:3px"></div>
<div class="r" style="left:592px;top:222px;width:4px;height:3px"></div>
<div class="r" style="left:589px;top:222px;width:3px;height:3px"></div>
<div class="r" style="left:596px;top:225px;width:3px;height:3px"></div>
<div class="y" style="left:592px;top:225px;width:4px;height:3px"></div>
<div class="r" style="left:589px;top:225px;width:3px;height:3px"></div>
<div class="k" style="left:596px;top:228px;width:3px;height:4px"></div>
<div class="r" style="left:592px;top:228px;width:4px;height:4px"></div>
<div class="r" style="left:589px;top:228px;width:3px;height:4px"></div>
<div class="r" style="left:596px;top:232px;width:3px;height:3px"></div>
<div class="y" style="left:592px;top:232px;width:4px;height:3px"></div>
<div class="r" style="left:589px;top:232px;width:3px;height:3px"></div>
<div class="y" style="left:596px;top:235px;width:3px;height:4px"></div>
<div class="r" style="left:592px;top:235px;width:4px;height:4px"></div>
<div class="r" style="left:589px;top:235px;width:3px;height:4px"></div>
<div class="k" style="left:596px;top:239px;width:3px;height:3px"></div>
<div class="k" style="left:592px;top:239px;width:4px;height:3px"></div>
<div class="k" style="left:589px;top:239px;width:3px;height:3px"></div>
<div class="y" style="left:596px;top:242px;width:3px;height:4px"></div>
<div class="r" style="left:592px;top:242px;width:4px;height:4px"></div>
<div class="r" style="left:589px;top:242px;width:3px;height:4px"></div>
<div class="r" style="left:596px;top:246px;width:3px;height:3px"></div>
<div class="y" style="left:592px;top:246px;width:4px;height:3px"></div>
<div class="r" style="left:589px;top:246px;width:3px;height:3px"></div>
<div class="y" style="left:596px;top:249px;width:3px;height:3px"></div>
<div class="r" style="left:592px;top:249px;width:4px;height:3px"></div>
<div class="r" style="left:589px;top:249px;width:3px;height:3px"></div>
<div class="r" style="left:596px;top:252px;width:3px;height:4px"></div>
<div class="y" style="left:592px;top:252px;width:4px;height:4px"></div>
<div class="r" style="left:589px;top:252px;width:3px;height:4px"></div>
<div class="y" style="left:596px;top:256px;width:3px;height:3px"></div>
<div class="r" style="left:592px;top:256px;width:4px;height:3px"></div>
<div class="r" style="left:589px;top:256px;width:3px;height:3px"></div>
<div class="r" style="left:596px;top:259px;width:3px;height:4px"></div>
<div class="y" style="left:592px;top:259px;width:4px;height:4px"></div>
<div class="r" style="left:589px;top:259px;width:3px;height:4px"></div>
<div class="y" style="left:596px;top:263px;width:3px;height:3px"></div>
<div class="r" style="left:592px;top:263px;width:4px;height:3px"></div>
<div class="k" style="left:586px;top:228px;width:3px;height:4px"></div>
<div class="k" style="left:586px;top:239px;width:3px;height:3px"></div>
<div class="h" style="top:4px;--c:#b8b8b8"></div>
<div class="h" style="top:10px"></div>
<div class="h" style="top:15px;--c:#b9b9b9"></div>
<div class="h" style="top:21px"></div>
<div class="h" style="top:26px;--c:#bbbbbb"></div>
<div class="h" style="top:32px"></div>
<div class="h" style="top:37px;--c:#bdbdbd"></div>
<div class="h" style="top:43px"></div>
<div class="h" style="top:48px;--c:#bfbfbf"></div>
<div class="h" style="top:54px"></div>
<div class="h" style="top:59px;--c:#c0c0c0"></div>
<div class="h" style="top:65px"></div>
<div class="h" style="top:70px;--c:#c2c2c2"></div>
<div class="h" style="top:76px"></div>
<div class="h" style="top:81px;--c:#c4c4c4"></div>
<div class="h" style="top:87px"></div>
<div class="h" style="top:92px;--c:#c5c5c5"></div>
<div class="h" style="top:98px"></div>
<div class="h" style="top:103px;--c:#c7c7c7"></div>
<div class="h" style="top:114px;--c:#c9c9c9"></div>
<div class="h" style="top:120px"></div>
<div class="h" style="top:125px"></div>
<div class="h" style="top:131px"></div>
<div class="h" style="top:136px"></div>
<div class="h" style="top:141px;--c:#b8b8b8"></div>
<div class="h" style="top:147px"></div>
<div class="h" style="top:152px;--c:#b9b9b9"></div>
<div class="h" style="top:158px"></div>
<div class="h" style="top:163px;--c:#bbbbbb"></div>
<div class="h" style="top:169px"></div>
<div class="h" style="top:174px;--c:#bdbdbd"></div>
<div class="h" style="top:180px"></div>
<div class="h" style="top:185px;--c:#bfbfbf"></div>
<div class="h" style="top:191px"></div>
<div class="h" style="top:196px;--c:#c0c0c0"></div>
<div class="h" style="top:202px"></div>
<div class="h" style="top:207px;--c:#c2c2c2"></div>
<div class="h" style="top:213px"></div>
<div class="h" style="top:224px"></div>
<div class="h" style="top:229px;--c:#c5c5c5"></div>
<div class="h" style="top:235px"></div>
<div class="h" style="top:240px;--c:#c7c7c7"></div>
<div class="h" style="top:246px"></div>
<div class="h" style="top:251px;--c:#c9c9c9"></div>
<div class="h" style="top:257px"></div>
<div class="h" style="top:262px"></div>
<div class="h" style="top:268px"></div>
<div class="h" style="top:273px"></div>
<div class="h" style="top:278px;--c:#b8b8b8"></div>
<div class="h" style="top:284px"></div>
<div class="h" style="top:289px;--c:#b9b9b9"></div>
<div class="h" style="top:295px"></div>
<div class="h" style="top:300px;--c:#bbbbbb"></div>
<div class="h" style="top:306px"></div>
<div class="h" style="top:311px;--c:#bdbdbd"></div>
<div class="h" style="top:317px"></div>
<div class="h" style="top:322px;--c:#bfbfbf"></div>
<div class="h" style="top:333px;--c:#c0c0c0"></div>
<div class="h" style="top:339px"></div>
<div class="h" style="top:344px;--c:#c2c2c2"></div>
<div class="h" style="top:350px"></div>
<div class="h" style="top:355px;--c:#c4c4c4"></div>
<div class="h" style="top:361px"></div>
<div class="h" style="top:366px;--c:#c5c5c5"></div>
<div class="h" style="top:372px"></div>
<div class="h" style="top:377px;--c:#c7c7c7"></div>
<div class="h" style="top:383px"></div>
<div class="h" style="top:388px;--c:#c9c9c9"></div>
<div class="h" style="top:394px"></div>
<div class="h" style="top:399px"></div>
<div class="h" style="top:405px"></div>
<div class="h" style="top:410px"></div>
<div class="h" style="top:415px;--c:#b8b8b8"></div>
<div class="h" style="top:421px"></div>
<div class="h" style="top:426px;--c:#b9b9b9"></div>
<div class="h" style="top:432px"></div>
<div class="h" style="top:443px"></div>
<div class="h" style="top:448px;--c:#bdbdbd"></div>
<div class="h" style="top:454px"></div>
<div class="h" style="top:459px;--c:#bfbfbf"></div>
<div class="h" style="top:465px"></div>
<div class="h" style="top:470px;--c:#c0c0c0"></div>
<div class="h" style="top:476px"></div>
<div class="h" style="top:481px;--c:#c2c2c2"></div>
<div class="h" style="top:487px"></div>
<div class="h" style="top:492px;--c:#c4c4c4"></div>
<div class="h" style="top:498px"></div>
<div class="h" style="top:503px;--c:#c5c5c5"></div>
<div class="h" style="top:509px"></div>
<div class="h" style="top:514px;--c:#c7c7c7"></div>
<div class="h" style="top:520px"></div>
<div class="h" style="top:525px;--c:#c9c9c9"></div>
<div class="h" style="top:531px"></div>
<div class="h" style="top:536px"></div>
<div class="h" style="top:542px"></div>
<div class="h" style="top:552px;--c:#b8b8b8"></div>
<div class="h" style="top:558px"></div>
<div class="h" style="top:563px;--c:#b9b9b9"></div>
<div class="h" style="top:569px"></div>
<div class="h" style="top:574px;--c:#bbbbbb"></div>
<div class="h" style="top:580px"></div>
<div class="h" style="top:585px;--c:#bdbdbd"></div>
<div class="h" style="top:591px"></div>
<div class="h" style="top:596px;--c:#bfbfbf"></div>
<div class="h" style="top:602px"></div>
<div class="h" style="top:607px;--c:#c0c0c0"></div>
<div class="h" style="top:613px"></div>
<div class="h" style="top:618px;--c:#c2c2c2"></div>
<div class="h" style="top:624px"></div>
<div class="h" style="top:629px;--c:#c4c4c4"></div>
<div class="h" style="top:635px"></div>
<div class="h" style="top:640px;--c:#c5c5c5"></div>
<div class="h" style="top:646px"></div>
<div class="h" style="top:651px;--c:#c7c7c7"></div>
<div class="h" style="top:662px;--c:#c9c9c9"></div>
<div class="h" style="top:668px"></div>
<div class="h" style="top:673px"></div>
<div class="h" style="top:679px"></div>
<div class="v" style="left:4px"></div>
<div class="v" style="left:9px;--c:#b9b9b9"></div>
<div class="v" style="left:15px"></div>
<div class="v" style="left:20px;--c:#bbbbbb"></div>
<div class="v" style="left:26px"></div>
<div class="v" style="left:31px;--c:#bdbdbd"></div>
<div class="v" style="left:37px"></div>
<div class="v" style="left:42px;--c:#bfbfbf"></div>
<div class="v" style="left:48px"></div>
<div class="v" style="left:53px;--c:#c0c0c0"></div>
<div class="v" style="left:59px"></div>
<div class="v" style="left:64px;--c:#c2c2c2"></div>
<div class="v" style="left:70px"></div>
<div class="v" style="left:75px;--c:#c4c4c4"></div>
<div class="v" style="left:81px"></div>
<div class="v" style="left:86px;--c:#c5c5c5"></div>
<div class="v" style="left:92px"></div>
<div class="v" style="left:97px;--c:#c7c7c7"></div>
<div class="v" style="left:108px;--c:#c9c9c9"></div>
<div class="v" style="left:114px"></div>
<div class="v" style="left:119px"></div>
<div class="v" style="left:125px"></div>
<div class="v" style="left:130px"></div>
<div class="v" style="left:135px;--c:#b8b8b8"></div>
<div class="v" style="left:141px"></div>
<div class="v" style="left:146px;--c:#b9b9b9"></div>
<div class="v" style="left:152px"></div>
<div class="v" style="left:157px;--c:#bbbbbb"></div>
<div class="v" style="left:163px"></div>
<div class="v" style="left:168px;--c:#bdbdbd"></div>
<div class="v" style="left:174px"></div>
<div class="v" style="left:179px;--c:#bfbfbf"></div>
<div class="v" style="left:185px"></div>
<div class="v" style="left:190px;--c:#c0c0c0"></div>
<div class="v" style="left:196px"></div>
<div class="v" style="left:201px;--c:#c2c2c2"></div>
<div class="v" style="left:207px"></div>
<div class="v" style="left:218px"></div>
<div class="v" style="left:223px;--c:#c5c5c5"></div>
<div class="v" style="left:229px"></div>
<div class="v" style="left:234px;--c:#c7c7c7"></div>
<div class="v" style="left:240px"></div>
<div class="v" style="left:245px;--c:#c9c9c9"></div>
<div class="v" style="left:251px"></div>
<div class="v" style="left:256px"></div>
<div class="v" style="left:262px"></div>
<div class="v" style="left:267px"></div>
<div class="v" style="left:272px;--c:#b8b8b8"></div>
<div class="v" style="left:278px"></div>
<div class="v" style="left:283px;--c:#b9b9b9"></div>
<div class="v" style="left:289px"></div>
<div class="v" style="left:294px;--c:#bbbbbb"></div>
<div class="v" style="left:300px"></div>
<div class="v" style="left:305px;--c:#bdbdbd"></div>
<div class="v" style="left:311px"></div>
<div class="v" style="left:316px;--c:#bfbfbf"></div>
<div class="v" style="left:327px;--c:#c0c0c0"></div>
<div class="v" style="left:333px"></div>
<div class="v" style="left:338px;--c:#c2c2c2"></div>
<div class="v" style="left:344px"></div>
<div class="v" style="left:349px;--c:#c4c4c4"></div>
<div class="v" style="left:355px"></div>
<div class="v" style="left:360px;--c:#c5c5c5"></div>
<div class="v" style="left:366px"></div>
<div class="v" style="left:371px;--c:#c7c7c7"></div>
<div class="v" style="left:377px"></div>
<div class="v" style="left:382px;--c:#c9c9c9"></div>
<div class="v" style="left:388px"></div>
<div class="v" style="left:393px"></div>
<div class="v" style="left:399px"></div>
<div class="v" style="left:404px"></div>
<div class="v" style="left:409px;--c:#b8b8b8"></div>
<div class="v" style="left:415px"></div>
<div class="v" style="left:420px;--c:#b9b9b9"></div>
<div class="v" style="left:426px"></div>
<div class="v" style="left:437px"></div>
<div class="v" style="left:442px;--c:#bdbdbd"></div>
<div class="v" style="left:448px"></div>
<div class="v" style="left:453px;--c:#bfbfbf"></div>
<div class="v" style="left:459px"></div>
<div class="v" style="left:464px;--c:#c0c0c0"></div>
<div class="v" style="left:470px"></div>
<div class="v" style="left:475px;--c:#c2c2c2"></div>
<div class="v" style="left:481px"></div>
<div class="v" style="left:486px;--c:#c4c4c4"></div>
<div class="v" style="left:492px"></div>
<div class="v" style="left:497px;--c:#c5c5c5"></div>
<div class="v" style="left:503px"></div>
<div class="v" style="left:508px;--c:#c7c7c7"></div>
<div class="v" style="left:514px"></div>
<div class="v" style="left:519px;--c:#c9c9c9"></div>
<div class="v" style="left:525px"></div>
<div class="v" style="left:530px"></div>
<div class="v" style="left:536px"></div>
<div class="v" style="left:546px;--c:#b8b8b8"></div>
<div class="v" style="left:552px"></div>
<div class="v" style="left:557px;--c:#b9b9b9"></div>
<div class="v" style="left:563px"></div>
<div class="v" style="left:568px;--c:#bbbbbb"></div>
<div class="v" style="left:574px"></div>
<div class="v" style="left:579px;--c:#bdbdbd"></div>
<div class="v" style="left:585px"></div>
<div class="v" style="left:590px;--c:#bfbfbf"></div>
<div class="v" style="left:596px"></div>
<div class="v" style="left:601px;--c:#c0c0c0"></div>
<div class="v" style="left:607px"></div>
<div class="v" style="left:612px;--c:#c2c2c2"></div>
<div class="v" style="left:618px"></div>
<div class="v" style="left:623px;--c:#c4c4c4"></div>
<div class="v" style="left:629px"></div>
<div class="v" style="left:634px;--c:#c5c5c5"></div>
<div class="v" style="left:640px"></div>
<div class="v" style="left:645px;--c:#c7c7c7"></div>
<div class="v" style="left:656px;--c:#c9c9c9"></div>
<div class="v" style="left:662px"></div>
<div class="v" style="left:667px"></div>
<div class="v" style="left:673px"></div>
<div class="H" style="top:109px"></div>
<div class="V" style="left:103px"></div>
<div class="H" style="top:218px"></div>
<div class="V" style="left:212px"></div>
<div class="H" style="top:328px"></div>
<div class="V" style="left:322px"></div>
<div class="H" style="top:437px"></div>
<div class="V" style="left:431px"></div>
<div class="H" style="top:547px"></div>
<div class="V" style="left:541px"></div>
<div class="H" style="top:657px"></div>
<div class="V" style="left:651px"></div>
</div>
<div id="bar">
<div style="left:4px;top:4px;width:4px;height:27px;background:#d6d6d6;border-radius:2px"></div>
<div class="btn" style="left:14px;width:109px"></div>
<div class="btn" style="left:127px;width:139px"></div>
<svg style="left:25px;top:10px" width="16" height="15" viewBox="0 0 16 15"><path d="M1.4 13.9 V12.2 Q1.7 10.7 3.7 9.7 Q2.7 7.4 3.5 5.2 Q4.8 1.8 7.9 1.8 Q11 1.8 12.3 5.2 Q13.1 7.4 12.1 9.7 Q14.1 10.7 14.4 12.2 V13.9" fill="none" stroke="#d4d4d4" stroke-width="1" stroke-dasharray="1 1.25"/><ellipse cx="7.9" cy="6.5" rx="2.15" ry="2.9" fill="#dedede"/><rect x="6.9" y="8.6" width="2" height="2.4" fill="#dedede"/><path d="M3 13.9 V12.8 Q3.2 11.6 5 11 L6.9 10.3 H8.9 L10.8 11 Q12.6 11.6 12.8 12.8 V13.9 Z" fill="#dedede"/></svg>
<div class="t" style="left:45px">Select subject</div>
<svg style="left:139px;top:12px" width="14" height="11" viewBox="0 0 14 11"><rect x="0" y="0" width="14" height="11" fill="#dedede"/><path d="M1 1 H13 V8.2 L10 5.6 L8 7.4 L4.6 4 L1 8 Z" fill="#505050"/><circle cx="10.3" cy="3.5" r="1.25" fill="#dedede"/><path d="M1.6 1.6 L6.6 4.4 M7.4 1.8 L4.4 3.6" stroke="#8c8c8c" stroke-width="0.8"/></svg>
<div class="t" style="left:158px;letter-spacing:-.08px">Remove background</div>
<svg style="left:280px;top:12px" width="14" height="11" viewBox="0 0 14 11"><rect x="0.5" y="0.5" width="13" height="10" fill="none" stroke="#c8c8c8" stroke-width="1" stroke-dasharray="2 1.6"/><path d="M12.8 0.4 L8.6 4.2 M8.3 1.6 V4.5 H11.2 M0.8 10.4 L5.2 6.8 M2.6 6.5 H5.5 V9.4" fill="none" stroke="#e8e8e8" stroke-width="1.3"/></svg>
<svg style="left:318px;top:10.7px" width="14" height="14" viewBox="0 0 14 14"><circle cx="7" cy="7" r="5.9" fill="none" stroke="#e0e0e0" stroke-width="1.2"/><path d="M11.2 2.8 A5.9 5.9 0 0 1 2.8 11.2 Z" fill="#e0e0e0"/></svg>
<svg style="left:355px;top:15.5px" width="16" height="10" viewBox="0 0 16 10"><circle cx="2.9" cy="2" r="1.55" fill="#e0e0e0"/><circle cx="7.95" cy="2" r="1.55" fill="#e0e0e0"/><circle cx="13" cy="2" r="1.55" fill="#e0e0e0"/></svg>
<svg style="left:373.8px;top:29px" width="4.4" height="2.2" viewBox="0 0 4.4 2.2"><path d="M0 0 H4.4 L2.2 2.2 Z" fill="#ececec"/></svg>
<svg style="left:394px;top:10.5px" width="14" height="14" viewBox="0 0 14 14"><path d="M0 2.6 H14 M0 6.9 H14 M0 11.3 H14" stroke="#dcdcdc" stroke-width="1.2"/><circle cx="3.8" cy="2.6" r="1.7" fill="#505050" stroke="#e4e4e4" stroke-width="1.1"/><circle cx="10" cy="6.9" r="1.7" fill="#505050" stroke="#e4e4e4" stroke-width="1.1"/><circle cx="5.5" cy="11.3" r="1.7" fill="#505050" stroke="#e4e4e4" stroke-width="1.1"/></svg>
</div>
<div id="sb"><div id="th"></div></div>
</body></html>
